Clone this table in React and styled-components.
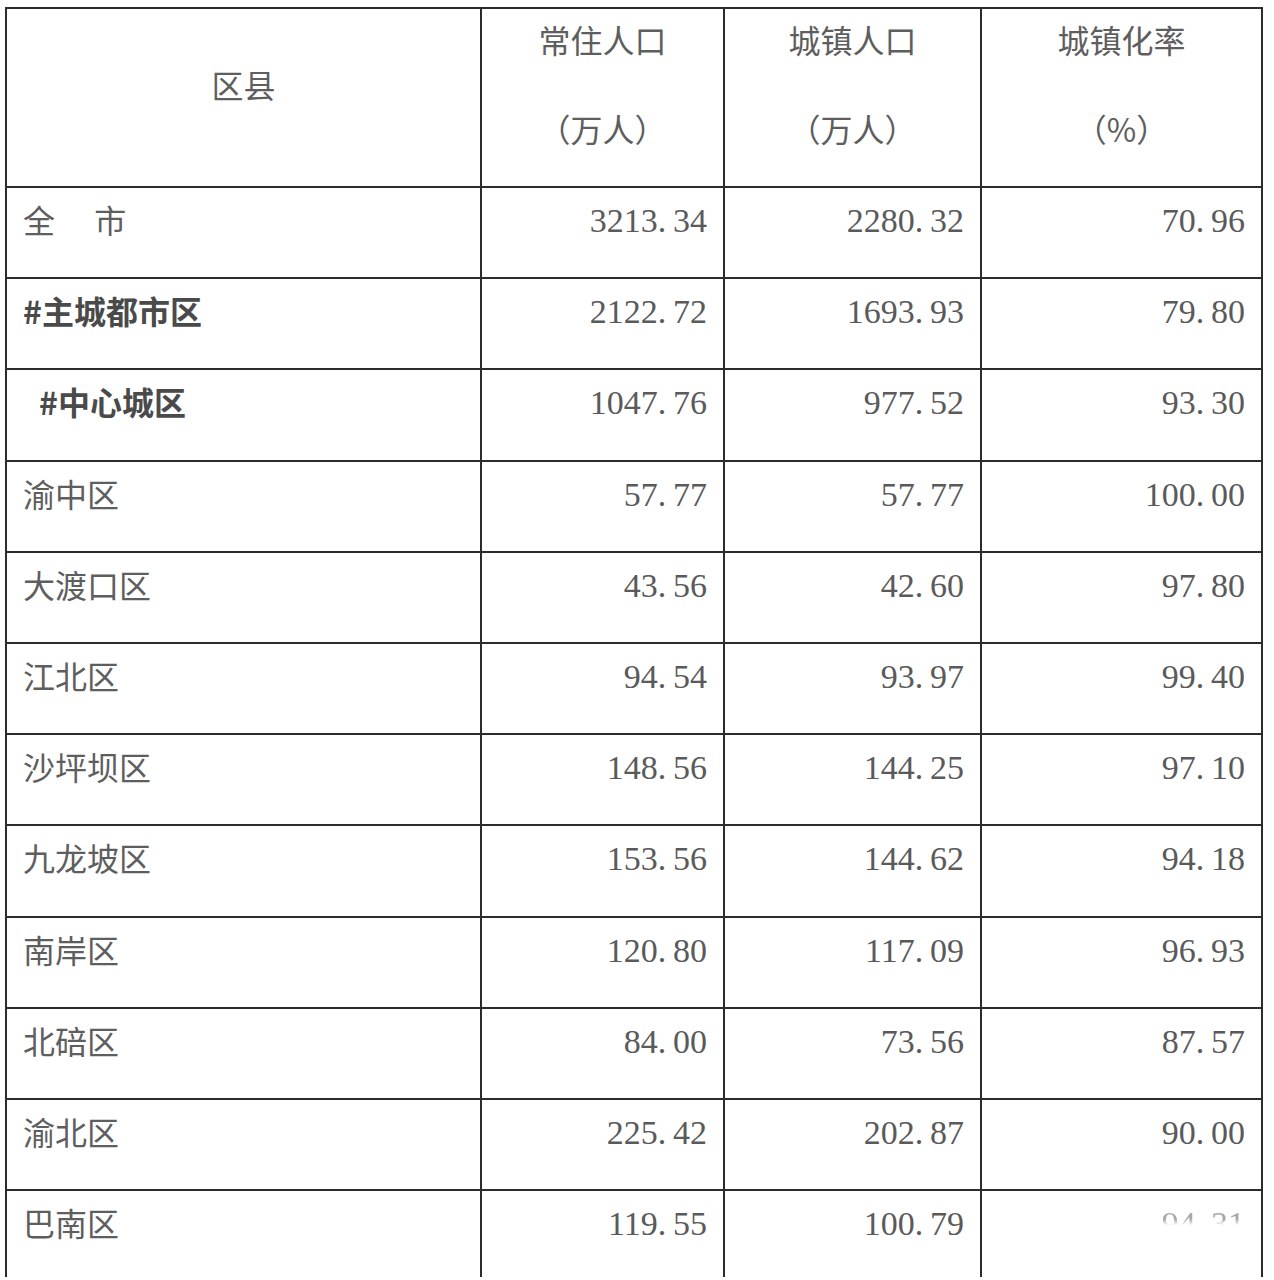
import React from "react";
import styled, { createGlobalStyle } from "styled-components";

const Global = createGlobalStyle`
  html, body { margin: 0; padding: 0; background: #ffffff; }
  body { font-family: "Noto Sans CJK SC", "Noto Sans", sans-serif; }
`;

const Page = styled.div`
  width: 1274px;
  height: 1280px;
  overflow: hidden;
  background: #ffffff;
  padding: 7px 0 0 5px;
  box-sizing: border-box;
`;

const Table = styled.table`
  width: 1258px;
  table-layout: fixed;
  border-collapse: collapse;
  border: 2px solid #2c2c2c;
  border-bottom: none;
`;

const HeadCell = styled.th`
  border: 2px solid #2c2c2c;
  vertical-align: top;
  text-align: center;
  font-weight: 400;
  font-size: 32px;
  line-height: 40px;
  color: #5e5e5e;
  padding: ${(p) => (p.$single ? "55px 0 0" : "10px 0 0")};
  font-family: "Noto Sans CJK SC", sans-serif;
`;

const HeadStack = styled.div`
  display: flex;
  flex-direction: column;
  align-items: center;
  gap: 49px;
`;

const Row = styled.tr`
  height: ${(p) => (p.$last ? "87px" : "91.2px")};
`;

const NameCell = styled.td`
  border: 2px solid #2c2c2c;
  border-bottom: ${(p) => (p.$last ? "none" : "2px solid #2c2c2c")};
  vertical-align: top;
  text-align: left;
  padding: 11px 0 0 ${(p) => (p.$indent ? "32px" : "16px")};
  font-size: 32px;
  line-height: 40px;
  white-space: pre;
  font-family: "Noto Sans CJK SC", sans-serif;
  font-weight: ${(p) => (p.$bold ? 700 : 400)};
  color: ${(p) => (p.$bold ? "#4a4a4a" : "#5e5e5e")};
`;

const NumCell = styled.td`
  border: 2px solid #2c2c2c;
  border-bottom: ${(p) => (p.$last ? "none" : "2px solid #2c2c2c")};
  vertical-align: top;
  text-align: right;
  padding: 13px 16px 0 0;
  font-family: "Liberation Serif", "Times New Roman", serif;
  font-size: 34px;
  line-height: 40px;
  color: #5a5a5a;
  white-space: pre;
`;

const Faded = styled.span`
  color: #a8a8a8;
  -webkit-mask-image: linear-gradient(to bottom, #000 0%, #000 38%, transparent 55%);
  mask-image: linear-gradient(to bottom, #000 0%, #000 38%, transparent 55%);
`;

const rows = [
  { name: "全\u3000 市", a: "3213.34", b: "2280.32", c: "70.96" },
  { name: "#主城都市区", a: "2122.72", b: "1693.93", c: "79.80", bold: true },
  { name: "#中心城区", a: "1047.76", b: "977.52", c: "93.30", bold: true, indent: true },
  { name: "渝中区", a: "57.77", b: "57.77", c: "100.00" },
  { name: "大渡口区", a: "43.56", b: "42.60", c: "97.80" },
  { name: "江北区", a: "94.54", b: "93.97", c: "99.40" },
  { name: "沙坪坝区", a: "148.56", b: "144.25", c: "97.10" },
  { name: "九龙坡区", a: "153.56", b: "144.62", c: "94.18" },
  { name: "南岸区", a: "120.80", b: "117.09", c: "96.93" },
  { name: "北碚区", a: "84.00", b: "73.56", c: "87.57" },
  { name: "渝北区", a: "225.42", b: "202.87", c: "90.00" },
  { name: "巴南区", a: "119.55", b: "100.79", c: "94.31", faded: true },
];

const fmt = (s) => s.replace(".", ".\u2009");

export default function App() {
  return (
    <>
      <Global />
      <Page>
        <Table>
          <colgroup>
            <col style={{ width: "475px" }} />
            <col style={{ width: "243px" }} />
            <col style={{ width: "257px" }} />
            <col style={{ width: "281px" }} />
          </colgroup>
          <thead>
            <tr style={{ height: "179px" }}>
              <HeadCell $single>区县</HeadCell>
              <HeadCell>
                <HeadStack>
                  <span>常住人口</span>
                  <span>（万人）</span>
                </HeadStack>
              </HeadCell>
              <HeadCell>
                <HeadStack>
                  <span>城镇人口</span>
                  <span>（万人）</span>
                </HeadStack>
              </HeadCell>
              <HeadCell>
                <HeadStack>
                  <span>城镇化率</span>
                  <span>（%）</span>
                </HeadStack>
              </HeadCell>
            </tr>
          </thead>
          <tbody>
            {rows.map((r, i) => {
              const last = i === rows.length - 1;
              return (
                <Row key={r.name} $last={last}>
                  <NameCell $bold={r.bold} $indent={r.indent} $last={last}>
                    {r.name}
                  </NameCell>
                  <NumCell $last={last}>{fmt(r.a)}</NumCell>
                  <NumCell $last={last}>{fmt(r.b)}</NumCell>
                  <NumCell $last={last}>
                    {r.faded ? <Faded>{fmt(r.c)}</Faded> : fmt(r.c)}
                  </NumCell>
                </Row>
              );
            })}
          </tbody>
        </Table>
      </Page>
    </>
  );
}
